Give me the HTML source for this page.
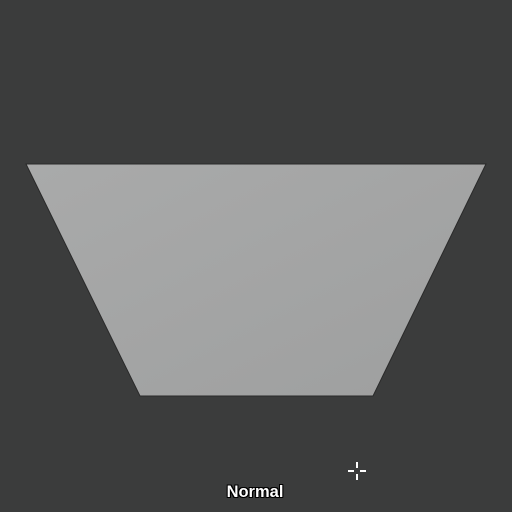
<!DOCTYPE html>
<html><head><style>
html,body{margin:0;padding:0;width:512px;height:512px;background:#3b3c3c;overflow:hidden}
.t{position:absolute;top:483px;width:512px;text-align:center;font:bold 16.5px "Liberation Sans",sans-serif;color:#fff;left:-1px;text-shadow:1px 1px 0 #000,-1px -1px 0 #000,1px -1px 0 #000,-1px 1px 0 #000,0 1px 0 #000,1px 0 0 #000}
</style></head><body>
<svg width="512" height="512" style="position:absolute;left:0;top:0">
<defs><linearGradient id="g" x1="0" y1="0" x2="1" y2="1"><stop offset="0" stop-color="#a9aaaa"/><stop offset="1" stop-color="#9e9f9f"/></linearGradient></defs>
<polygon points="26,164 486,164 373,396 140,396" fill="url(#g)" stroke="#2a2a2a" stroke-width="1"/>
<g stroke="#fff" stroke-width="2">
<line x1="357" y1="462" x2="357" y2="468"/><line x1="357" y1="474" x2="357" y2="480"/>
<line x1="348" y1="471" x2="354" y2="471"/><line x1="360" y1="471" x2="366" y2="471"/>
</g>
</svg>
<div class="t">Normal</div>
</body></html>
